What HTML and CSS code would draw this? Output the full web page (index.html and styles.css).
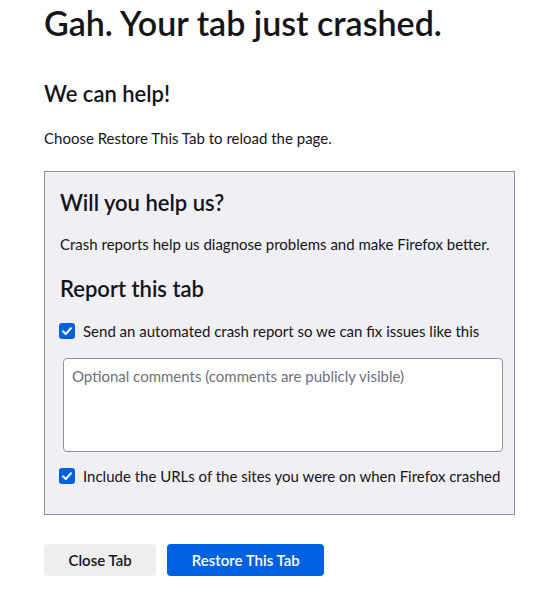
FILE: index.html
```html
<!DOCTYPE html>
<html lang="en">
<head>
<meta charset="utf-8">
<title>Tab crashed</title>
<link rel="stylesheet" href="styles.css">
</head>
<body>
<main class="page">
  <h1 class="title">Gah. Your tab just crashed.</h1>
  <h2 class="subtitle">We can help!</h2>
  <p class="text">Choose Restore This Tab to reload the page.</p>
  <section class="report">
    <h2 class="report-title">Will you help us?</h2>
    <p class="text">Crash reports help us diagnose problems and make Firefox better.</p>
    <h2 class="report-title second">Report this tab</h2>
    <label class="check">
      <span class="box"><svg viewBox="0 0 16 16" width="16" height="16"><path d="M4 8.2 L6.8 11 L12 5.2" fill="none" stroke="#fff" stroke-width="2" stroke-linecap="round" stroke-linejoin="round"/></svg></span>
      <span>Send an automated crash report so we can fix issues like this</span>
    </label>
    <div class="comments">Optional comments (comments are publicly visible)</div>
    <label class="check last">
      <span class="box"><svg viewBox="0 0 16 16" width="16" height="16"><path d="M4 8.2 L6.8 11 L12 5.2" fill="none" stroke="#fff" stroke-width="2" stroke-linecap="round" stroke-linejoin="round"/></svg></span>
      <span>Include the URLs of the sites you were on when Firefox crashed</span>
    </label>
  </section>
  <div class="actions">
    <button class="btn">Close Tab</button>
    <button class="btn primary">Restore This Tab</button>
  </div>
</main>
</body>
</html>
```
FILE: styles.css
```css
html, body {
  margin: 0;
  padding: 0;
  background: #fff;
}
body {
  font-family: "Lato", "Open Sans", sans-serif;
  font-size: 15px;
  color: #15141a;
}
.page {
  padding: 3px 0 0 44px;
  width: 471px;
}
.title {
  margin: 0;
  font-size: 34px;
  line-height: 40px;
  font-weight: 600;
}
.subtitle {
  margin: 36px 0 0;
  font-size: 22px;
  line-height: 30px;
  font-weight: 600;
}
.text {
  margin: 18px 0 0;
  line-height: 22px;
}
.report {
  margin-top: 22px;
  border: 1px solid #8f8f9d;
  background: #f0f0f4;
  padding: 16px 15px 27px;
  display: flex;
  flex-direction: column;
}
.report-title {
  margin: 0;
  font-size: 22px;
  line-height: 30px;
  font-weight: 600;
}
.report .text {
  margin-top: 15px;
}
.report-title.second {
  margin-top: 19px;
}
.check {
  display: flex;
  align-items: center;
  gap: 8px;
  margin: 16px 0 0 -1px;
  line-height: 22px;
  white-space: nowrap;
}
.check.last {
  margin-top: 13px;
}
.box {
  width: 16px;
  height: 16px;
  border-radius: 3px;
  background: #0061e0;
  display: flex;
  flex: none;
}
.comments {
  margin: 16px 0 0 3px;
  width: 440px;
  height: 94px;
  box-sizing: border-box;
  border: 1px solid #8f8f9d;
  border-radius: 4px;
  background: #fff;
  padding: 6px 8px;
  color: #6f6f7e;
  line-height: 22px;
}
.actions {
  display: flex;
  gap: 11px;
  margin-top: 29px;
}
.btn {
  font: inherit;
  font-weight: 600;
  height: 32px;
  border: none;
  border-radius: 4px;
  padding: 0 24.5px;
  background: #eeeeef;
  color: #15141a;
}
.btn.primary {
  background: #0061e0;
  color: #fff;
}
```
